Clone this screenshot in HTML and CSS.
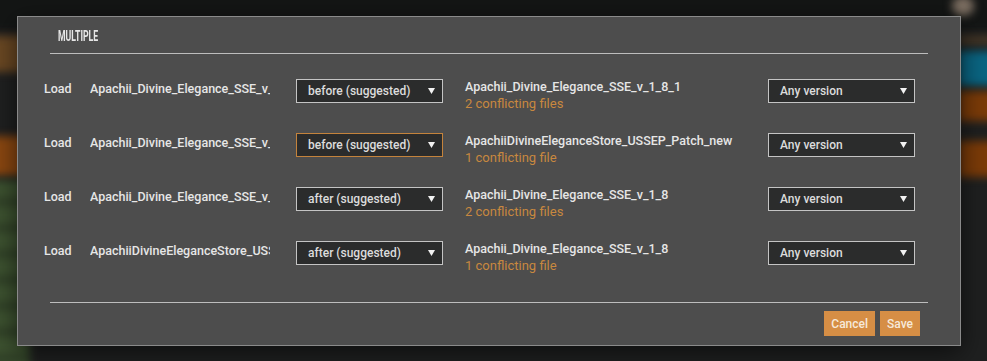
FILE: index.html
```html
<!DOCTYPE html>
<html>
<head>
  <title>Multiple</title>
  <link rel="stylesheet" href="styles.css">
</head>
<body>
  <div class="backdrop">
    <div class="blob top-band"></div>
    <div class="blob l-brown"></div>
    <div class="blob l-orange"></div>
    <div class="blob l-green"></div>
    <div class="blob r-light"></div>
    <div class="blob r-brown"></div>
    <div class="blob r-blue"></div>
    <div class="blob r-orange1"></div>
    <div class="blob r-orange2"></div>
  </div>

  <div class="dialog">
    <div class="head"><span class="title">MULTIPLE</span></div>

    <div class="rows">
      <div class="row">
        <span class="verb">Load</span>
        <span class="name">Apachii_Divine_Elegance_SSE_v_1_8_1_patch</span>
        <div class="select order">
          <span>before (suggested)</span>
          <svg width="7" height="6" viewBox="0 0 7 6"><path d="M0 0H7L3.5 6Z" fill="#f2f2f2"/></svg>
        </div>
        <div class="conflict">
          <div class="other">Apachii_Divine_Elegance_SSE_v_1_8_1</div>
          <div class="count">2 conflicting files</div>
        </div>
        <div class="select version">
          <span>Any version</span>
          <svg width="7" height="6" viewBox="0 0 7 6"><path d="M0 0H7L3.5 6Z" fill="#f2f2f2"/></svg>
        </div>
      </div>

      <div class="row">
        <span class="verb">Load</span>
        <span class="name">Apachii_Divine_Elegance_SSE_v_1_8_1_patch</span>
        <div class="select order focused">
          <span>before (suggested)</span>
          <svg width="7" height="6" viewBox="0 0 7 6"><path d="M0 0H7L3.5 6Z" fill="#f2f2f2"/></svg>
        </div>
        <div class="conflict">
          <div class="other">ApachiiDivineEleganceStore_USSEP_Patch_new</div>
          <div class="count">1 conflicting file</div>
        </div>
        <div class="select version">
          <span>Any version</span>
          <svg width="7" height="6" viewBox="0 0 7 6"><path d="M0 0H7L3.5 6Z" fill="#f2f2f2"/></svg>
        </div>
      </div>

      <div class="row">
        <span class="verb">Load</span>
        <span class="name">Apachii_Divine_Elegance_SSE_v_1_8_1</span>
        <div class="select order">
          <span>after (suggested)</span>
          <svg width="7" height="6" viewBox="0 0 7 6"><path d="M0 0H7L3.5 6Z" fill="#f2f2f2"/></svg>
        </div>
        <div class="conflict">
          <div class="other">Apachii_Divine_Elegance_SSE_v_1_8</div>
          <div class="count">2 conflicting files</div>
        </div>
        <div class="select version">
          <span>Any version</span>
          <svg width="7" height="6" viewBox="0 0 7 6"><path d="M0 0H7L3.5 6Z" fill="#f2f2f2"/></svg>
        </div>
      </div>

      <div class="row">
        <span class="verb">Load</span>
        <span class="name">ApachiiDivineEleganceStore_USSEP_Patch_new</span>
        <div class="select order">
          <span>after (suggested)</span>
          <svg width="7" height="6" viewBox="0 0 7 6"><path d="M0 0H7L3.5 6Z" fill="#f2f2f2"/></svg>
        </div>
        <div class="conflict">
          <div class="other">Apachii_Divine_Elegance_SSE_v_1_8</div>
          <div class="count">1 conflicting file</div>
        </div>
        <div class="select version">
          <span>Any version</span>
          <svg width="7" height="6" viewBox="0 0 7 6"><path d="M0 0H7L3.5 6Z" fill="#f2f2f2"/></svg>
        </div>
      </div>
    </div>

    <div class="foot">
      <button class="btn">Cancel</button>
      <button class="btn">Save</button>
    </div>
  </div>
</body>
</html>
```

FILE: styles.css
```css
body {
  margin: 0;
  height: 361px;
  overflow: hidden;
  background-color: #1f2020;
  font-family: Roboto, "Liberation Sans", sans-serif;
  position: relative;
}

/* blurred app behind the modal */
.backdrop {
  position: absolute;
  inset: 0;
  overflow: hidden;
}

.blob {
  position: absolute;
  filter: blur(4px);
}

.top-band { left: -10px; right: -10px; top: -10px; height: 40px; background: #141615; }
.l-brown { left: -10px; width: 40px; top: 36px; height: 36px; background: #6a4823; }
.l-orange { left: -10px; width: 40px; top: 136px; height: 40px; background: #8a4711; }
.l-green {
  left: -10px; width: 40px; top: 180px; height: 200px;
  background: repeating-linear-gradient(#3d5230 0 18px, #2f3f26 18px 26px);
}
.r-light { left: 952px; width: 22px; top: -4px; height: 20px; background: #7d6f62; border-radius: 50%; }
.r-brown { left: 958px; width: 40px; top: 36px; height: 9px; background: #473827; }
.r-blue { left: 958px; width: 40px; top: 51px; height: 35px; background: #0a6582; }
.r-orange1 { left: 958px; width: 40px; top: 91px; height: 30px; background: #7b3b08; }
.r-orange2 { left: 958px; width: 40px; top: 141px; height: 36px; background: #7b3b08; }

.dialog {
  position: absolute;
  left: 17px;
  top: 16px;
  width: 942px;
  background-color: #4d4d4d;
  border: 1px solid #8a8a8a;
  box-shadow: 0 6px 24px rgba(0, 0, 0, 0.6);
}

.head {
  margin: 0 32px;
  padding: 9px 8px 13px;
  height: 14px;
  border-bottom: 1px solid #bdbdbd;
}

.title {
  display: inline-block;
  font-size: 14px;
  line-height: 14px;
  font-weight: 700;
  color: #e6e6e6;
  transform: scaleX(0.62);
  transform-origin: left center;
}

.rows {
  padding: 20px 0 0 26px;
}

.row {
  display: flex;
  align-items: flex-start;
  height: 54px;
}

.verb,
.name {
  margin-top: 6px;
  font-size: 12.5px;
  line-height: 17px;
  font-weight: 500;
  color: #e6e6e6;
}

.verb {
  width: 46px;
}

.name {
  width: 180px;
  overflow: hidden;
  white-space: nowrap;
  margin-right: 26px;
}

.select {
  margin-top: 5px;
  box-sizing: border-box;
  width: 147px;
  height: 24px;
  display: flex;
  align-items: center;
  justify-content: space-between;
  padding: 0 7px 0 11px;
  background-color: #2b2c2c;
  border: 1px solid #c4c4c4;
  font-size: 12px;
  font-weight: 500;
  color: #dcdcdc;
}

.select.focused {
  border-color: #c4833c;
}

.conflict {
  width: 303px;
  margin: 4px 0 0 22px;
  line-height: 17px;
}

.other {
  font-size: 12.5px;
  font-weight: 500;
  color: #e6e6e6;
}

.count {
  font-size: 13px;
  color: #c8883f;
}

.foot {
  margin: 12px 32px 0;
  padding: 8px 8px 9px;
  border-top: 1px solid #bdbdbd;
  display: flex;
  justify-content: flex-end;
  gap: 5px;
}

.btn {
  height: 25px;
  padding: 0 7px;
  border: none;
  background-color: #d68e45;
  color: #f6e9da;
  font-family: Roboto, "Liberation Sans", sans-serif;
  font-size: 12px;
  font-weight: 500;
  cursor: pointer;
}
```
